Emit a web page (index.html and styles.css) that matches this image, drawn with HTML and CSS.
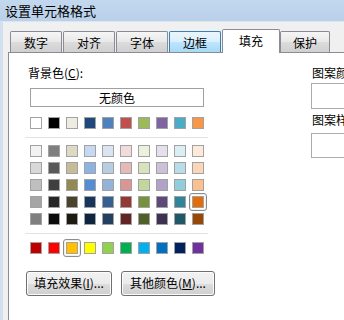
FILE: index.html
```html
<!DOCTYPE html>
<html lang="zh-CN">
<head>
<meta charset="utf-8">
<title>设置单元格格式</title>
<link rel="stylesheet" href="styles.css">
</head>
<body>
<div class="window">
  <div class="titlebar">设置单元格格式</div>
  <div class="dialog">
    <div class="tabs">
      <div class="tab">数字</div>
      <div class="tab">对齐</div>
      <div class="tab">字体</div>
      <div class="tab hover">边框</div>
      <div class="tab active">填充</div>
      <div class="tab last">保护</div>
    </div>
    <div class="panel">
      <div class="left">
        <div class="label">背景色(<u>C</u>):</div>
        <div class="nocolor">无颜色</div>
        <div class="row theme">
          <span class="sw" style="background:#ffffff"></span>
          <span class="sw" style="background:#000000"></span>
          <span class="sw" style="background:#eeece1"></span>
          <span class="sw" style="background:#1f497d"></span>
          <span class="sw" style="background:#4f81bd"></span>
          <span class="sw" style="background:#c0504d"></span>
          <span class="sw" style="background:#9bbb59"></span>
          <span class="sw" style="background:#8064a2"></span>
          <span class="sw" style="background:#4bacc6"></span>
          <span class="sw" style="background:#f79646"></span>
        </div>
        <div class="sep"></div>
        <div class="tints">
          <div class="row">
            <span class="sw" style="background:#f2f2f2"></span>
            <span class="sw" style="background:#7f7f7f"></span>
            <span class="sw" style="background:#ddd9c3"></span>
            <span class="sw" style="background:#c6d9f0"></span>
            <span class="sw" style="background:#dbe5f1"></span>
            <span class="sw" style="background:#f2dcdb"></span>
            <span class="sw" style="background:#ebf1dd"></span>
            <span class="sw" style="background:#e5e0ec"></span>
            <span class="sw" style="background:#dbeef3"></span>
            <span class="sw" style="background:#fdeada"></span>
          </div>
          <div class="row">
            <span class="sw" style="background:#d8d8d8"></span>
            <span class="sw" style="background:#595959"></span>
            <span class="sw" style="background:#c4bd97"></span>
            <span class="sw" style="background:#8db3e2"></span>
            <span class="sw" style="background:#b8cce4"></span>
            <span class="sw" style="background:#e5b9b7"></span>
            <span class="sw" style="background:#d7e3bc"></span>
            <span class="sw" style="background:#ccc1d9"></span>
            <span class="sw" style="background:#b7dde8"></span>
            <span class="sw" style="background:#fbd5b5"></span>
          </div>
          <div class="row">
            <span class="sw" style="background:#bfbfbf"></span>
            <span class="sw" style="background:#3f3f3f"></span>
            <span class="sw" style="background:#938953"></span>
            <span class="sw" style="background:#548dd4"></span>
            <span class="sw" style="background:#95b3d7"></span>
            <span class="sw" style="background:#d99694"></span>
            <span class="sw" style="background:#c3d69b"></span>
            <span class="sw" style="background:#b2a2c7"></span>
            <span class="sw" style="background:#92cddc"></span>
            <span class="sw" style="background:#fac08f"></span>
          </div>
          <div class="row">
            <span class="sw" style="background:#a5a5a5"></span>
            <span class="sw" style="background:#262626"></span>
            <span class="sw" style="background:#494429"></span>
            <span class="sw" style="background:#17365d"></span>
            <span class="sw" style="background:#366092"></span>
            <span class="sw" style="background:#953734"></span>
            <span class="sw" style="background:#76923c"></span>
            <span class="sw" style="background:#5f497a"></span>
            <span class="sw" style="background:#31859b"></span>
            <span class="sw sel" style="background:#e36c09"></span>
          </div>
          <div class="row">
            <span class="sw" style="background:#7f7f7f"></span>
            <span class="sw" style="background:#0c0c0c"></span>
            <span class="sw" style="background:#1d1b10"></span>
            <span class="sw" style="background:#0f243e"></span>
            <span class="sw" style="background:#244061"></span>
            <span class="sw" style="background:#632423"></span>
            <span class="sw" style="background:#4f6128"></span>
            <span class="sw" style="background:#3f3151"></span>
            <span class="sw" style="background:#205867"></span>
            <span class="sw" style="background:#974806"></span>
          </div>
        </div>
        <div class="sep"></div>
        <div class="row standard">
          <span class="sw" style="background:#c00000"></span>
          <span class="sw" style="background:#ff0000"></span>
          <span class="sw sel" style="background:#ffc000"></span>
          <span class="sw" style="background:#ffff00"></span>
          <span class="sw" style="background:#92d050"></span>
          <span class="sw" style="background:#00b050"></span>
          <span class="sw" style="background:#00b0f0"></span>
          <span class="sw" style="background:#0070c0"></span>
          <span class="sw" style="background:#002060"></span>
          <span class="sw" style="background:#7030a0"></span>
        </div>
        <div class="buttons">
          <div class="btn fx">填充效果(<u>I</u>)...</div>
          <div class="btn more">其他颜色(<u>M</u>)...</div>
        </div>
      </div>
      <div class="right">
        <div class="rlabel">图案颜色(<u>A</u>):</div>
        <div class="rbox first"></div>
        <div class="rlabel second">图案样式(<u>P</u>):</div>
        <div class="rbox"></div>
      </div>
    </div>
  </div>
</div>
</body>
</html>
```
FILE: styles.css
```css
html, body {
  margin: 0;
  padding: 0;
}

body {
  width: 344px;
  height: 320px;
  overflow: hidden;
}

.window {
  width: 344px;
  height: 320px;
  overflow: hidden;
  display: flex;
  flex-direction: column;
  font-family: "Noto Sans CJK SC", "Microsoft YaHei", sans-serif;
  font-size: 12px;
  color: #000;
}

.titlebar {
  flex: none;
  height: 21px;
  line-height: 21px;
  padding-left: 5px;
  font-size: 13px;
  background: linear-gradient(#c3d8ee, #b9d0e9);
  white-space: nowrap;
}

.dialog {
  flex: 1;
  display: flex;
  flex-direction: column;
  background: #f0f0f0;
  border-top: 1px solid #dbe6f2;
  border-left: 3px solid #d2dfee;
  padding: 7px 0 0 5px;
  min-height: 0;
}

.tabs {
  flex: none;
  display: flex;
  align-items: flex-end;
  height: 23px;
  margin-left: 2px;
  position: relative;
  z-index: 1;
}

.tab {
  flex: none;
  box-sizing: border-box;
  width: 52px;
  height: 21px;
  margin-right: 1px;
  border: 1px solid #898c95;
  border-bottom: none;
  border-radius: 2px 2px 0 0;
  background: linear-gradient(#f6f6f6, #e8e8e8 50%, #dcdcdc 51%, #d0d0d0);
  text-align: center;
  line-height: 20px;
  padding-top: 1px;
  white-space: nowrap;
}

.tab.hover {
  border-color: #3c7fb1;
  background: linear-gradient(#eaf6fd, #d9f0fc 50%, #bee6fd 51%, #a7d9f5);
}

.tab.active {
  width: 58px;
  height: 24px;
  margin-right: 0;
  margin-bottom: -1px;
  background: #fff;
  padding-top: 1px;
}

.tab.last {
  width: 50px;
}

.panel {
  flex: 1;
  display: flex;
  background: #fff;
  border-top: 1px solid #898c95;
  border-left: 1px solid #898c95;
  padding-top: 12px;
  min-height: 0;
}

.left {
  flex: none;
  width: 302px;
  box-sizing: border-box;
  padding-left: 16px;
}

.label {
  margin-left: 3px;
  height: 16px;
  line-height: 16px;
  white-space: nowrap;
}

.nocolor {
  box-sizing: border-box;
  width: 174px;
  height: 19px;
  margin: 7px 0 0 5px;
  border: 1px solid #a0a0a0;
  text-align: center;
  line-height: 17px;
}

.row {
  display: flex;
  gap: 6px;
  margin-left: 5px;
}

.row.theme {
  margin-top: 10px;
}

.sep {
  width: 183px;
  height: 1px;
  margin-top: 8px;
  background: #e2e2e2;
}

.tints {
  display: flex;
  flex-direction: column;
  gap: 5px;
  margin-top: 7px;
}

.row.standard {
  margin-top: 8px;
}

.sw {
  display: block;
  flex: none;
  box-sizing: border-box;
  width: 12px;
  height: 12px;
  border: 1px solid #a2a2a2;
}

.sw.sel {
  position: relative;
}

.sw.sel::after {
  content: "";
  position: absolute;
  left: -4px;
  top: -4px;
  right: -4px;
  bottom: -4px;
  border: 1px solid #8c8c8c;
  border-radius: 3px;
  box-shadow: inset 0 0 0 1px #eeeeee;
}

.buttons {
  display: flex;
  gap: 9px;
  margin: 17px 0 0 1px;
}

.btn {
  box-sizing: border-box;
  height: 25px;
  border: 1px solid #707070;
  border-radius: 3px;
  background: linear-gradient(#f2f2f2, #ebebeb 50%, #dddddd 51%, #cfcfcf);
  box-shadow: inset 0 0 0 1px #fcfcfc;
  text-align: center;
  line-height: 22px;
  white-space: nowrap;
}

.btn.fx {
  width: 86px;
}

.btn.more {
  width: 94px;
}

.right {
  flex: none;
  width: 140px;
}

.rlabel {
  margin-left: 1px;
  height: 16px;
  line-height: 16px;
  white-space: nowrap;
}

.rlabel.second {
  margin-top: 3px;
}

.rbox {
  box-sizing: border-box;
  width: 120px;
  height: 25px;
  margin-top: 5px;
  border: 1px solid #acacac;
  background: #fff;
}

.rbox.first {
  height: 26px;
  margin-top: 2px;
}
```
